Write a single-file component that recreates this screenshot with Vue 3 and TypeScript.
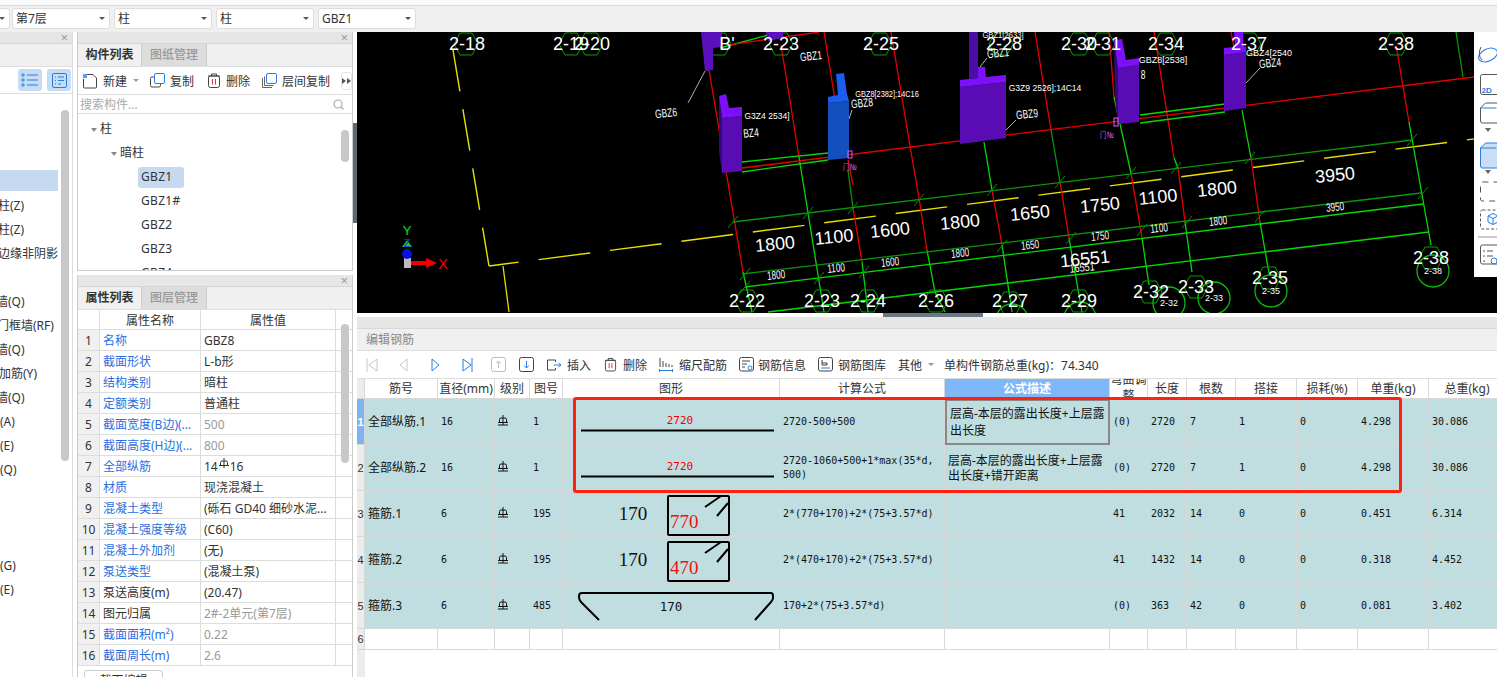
<script setup lang="ts">
interface Seg { d: string; c: string; w?: number }
interface Label { x: number; y: number; t: string; s: number; r?: number; sx?: number; c?: string }
interface Poly { p: string; c: string }

const selects = ['第7层', '柱', '柱', 'GBZ1']

const leftItems = [
  { t: '', sel: true, x: 0 },
  { t: '框架柱(Z)', x: -26 },
  { t: '框架柱(Z)', x: -26 },
  { t: '约束边缘非阴影', x: -26 },
  { t: '', x: 0 },
  { t: '砌体墙(Q)', x: -28 },
  { t: '人防门框墙(RF)', x: -27 },
  { t: '砌体墙(Q)', x: -28 },
  { t: '砌体加筋(Y)', x: -25 },
  { t: '砌体墙(Q)', x: -28 },
  { t: '门(A)', x: -12 },
  { t: '门(E)', x: -12 },
  { t: '墙(Q)', x: -12 },
  { t: '', x: 0 },
  { t: '', x: 0 },
  { t: '', x: 0 },
  { t: '门(G)', x: -12 },
  { t: '门(E)', x: -12 }
]

const treeLeaves = ['GBZ1#', 'GBZ2', 'GBZ3', 'GBZ4']

const attrs = [
  { n: '名称', v: 'GBZ8' },
  { n: '截面形状', v: 'L-b形' },
  { n: '结构类别', v: '暗柱' },
  { n: '定额类别', v: '普通柱' },
  { n: '截面宽度(B边)(...', v: '500', muted: true },
  { n: '截面高度(H边)(...', v: '800', muted: true },
  { n: '全部纵筋', v: '14', bar: '16' },
  { n: '材质', v: '现浇混凝土' },
  { n: '混凝土类型', v: '(砾石 GD40 细砂水泥...' },
  { n: '混凝土强度等级', v: '(C60)' },
  { n: '混凝土外加剂', v: '(无)' },
  { n: '泵送类型', v: '(混凝土泵)' },
  { n: '泵送高度(m)', v: '(20.47)', plain: true },
  { n: '图元归属', v: '2#-2单元(第7层)', plain: true, muted: true },
  { n: '截面面积(m²)', v: '0.22', muted: true },
  { n: '截面周长(m)', v: '2.6', muted: true }
]

const colWidths = [8, 73, 57, 35, 33, 217, 165, 165, 38, 39, 49, 61, 61, 71, 77]

const rebars = [
  { name: '全部纵筋.1', d: '16', no: '1', shape: 'line', val: '2720', f: '2720-500+500', desc: '层高-本层的露出长度+上层露出长度', adj: '(0)', len: '2720', n: '7', lap: '1', loss: '0', unit: '4.298', total: '30.086' },
  { name: '全部纵筋.2', d: '16', no: '1', shape: 'line', val: '2720', f: '2720-1060+500+1*max(35*d,\u200b500)', desc: '层高-本层的露出长度+上层露出长度+错开距离', adj: '(0)', len: '2720', n: '7', lap: '1', loss: '0', unit: '4.298', total: '30.086' },
  { name: '箍筋.1', d: '6', no: '195', shape: 'hoop', val: '770', f: '2*(770+170)+2*(75+3.57*d)', desc: '', adj: '41', len: '2032', n: '14', lap: '0', loss: '0', unit: '0.451', total: '6.314' },
  { name: '箍筋.2', d: '6', no: '195', shape: 'hoop', val: '470', f: '2*(470+170)+2*(75+3.57*d)', desc: '', adj: '41', len: '1432', n: '14', lap: '0', loss: '0', unit: '0.318', total: '4.452' },
  { name: '箍筋.3', d: '6', no: '485', shape: 'hook', val: '170', f: '170+2*(75+3.57*d)', desc: '', adj: '(0)', len: '363', n: '42', lap: '0', loss: '0', unit: '0.081', total: '3.402' }
]

const R = '#e80000'
const G = '#06d806'
const DG = '#0a960a'
const Y = '#e8e000'

const cadLines: Seg[] = [
  { d: 'M709 70L743 272', c: R },
  { d: 'M743 272L752 312', c: G },
  { d: 'M781 45L799 157', c: R },
  { d: 'M799 157L824 312', c: G },
  { d: 'M824 32L835 100', c: R },
  { d: 'M848 160L853 185', c: R },
  { d: 'M848 170L853 208', c: DG },
  { d: 'M853 208L862 262', c: R },
  { d: 'M862 262L868 312', c: G },
  { d: 'M891 32L910 146L919 198L927 250', c: R },
  { d: 'M927 250L935 292L945 312', c: G },
  { d: 'M984 142L992 190', c: G },
  { d: 'M992 190L1002 245', c: R },
  { d: 'M1002 245L1012 312', c: G },
  { d: 'M1035 32L1051 130', c: R },
  { d: 'M1051 130L1060 182', c: DG },
  { d: 'M1060 182L1069 238', c: R },
  { d: 'M1069 238L1082 312', c: G },
  { d: 'M1109 32L1114 97', c: R },
  { d: 'M1114 97L1131 173', c: G },
  { d: 'M1131 173L1142 238', c: R },
  { d: 'M1142 238L1149 285', c: G },
  { d: 'M1154 32L1174 158', c: R },
  { d: 'M1174 158L1178 168', c: G },
  { d: 'M1178 168L1185 222', c: R },
  { d: 'M1185 222L1192 272', c: G },
  { d: 'M1231 32L1234 47', c: R },
  { d: 'M1242 110L1251 158', c: G },
  { d: 'M1251 158L1260 222', c: R },
  { d: 'M1260 222L1269 273', c: G },
  { d: 'M1396 45L1409 122', c: R },
  { d: 'M1409 122L1431 245', c: G },
  { d: 'M1456 32L1463 77', c: DG },
  { d: 'M742 168L1474 77', c: R },
  { d: 'M742 162L828 153', c: G },
  { d: 'M742 172L828 160', c: G },
  { d: 'M1140 115L1225 104', c: G },
  { d: 'M1140 123L1225 112', c: G },
  { d: 'M720 48L768 35', c: G },
  { d: 'M728 45L819 32', c: R },
  { d: 'M733 222L1412 140', c: DG },
  { d: 'M742 274L1421 193', c: DG },
  { d: 'M745 287L1423 204', c: G },
  { d: 'M768 312L1429 232', c: G },
  { d: 'M503 266L509 312', c: Y },
  { d: 'M705 71L688 103', c: '#ddd', w: 0.8 },
  { d: 'M849 119L852 110', c: '#ddd', w: 0.8 },
  { d: 'M1006 130L1016 120', c: '#ddd', w: 0.8 },
  { d: 'M1246 83L1260 68', c: '#ddd', w: 0.8 },
  { d: 'M980 67L987 58', c: '#ddd', w: 0.8 }
]

const ticks = [
  [733, 222], [808, 213], [853, 208], [919, 200], [992, 190], [1060, 182], [1131, 173], [1176, 168], [1250, 158], [1412, 140],
  [745, 274], [745, 287], [819, 278], [864, 272], [1002, 246], [1071, 238], [1142, 230], [1187, 222], [1260, 216], [1423, 193]
]

const cols: Poly[] = [
  { p: '705,32 722,32 722,47 713,48 713,70 705,71 701,32', c: '#5b10bd' },
  { p: '766,32 783,32 783,38 768,41', c: '#5b10bd' },
  { p: '719,96 722,118 722,173 719,152', c: '#2f0a78' },
  { p: '722,118 742,116 742,171 722,173', c: '#5a0cb4' },
  { p: '719,96 726,94 729,108 742,107 742,116 722,118', c: '#7d10fa' },
  { p: '828,103 849,101 849,158 828,160', c: '#1450bd' },
  { p: '836,74 844,73 847,94 849,101 828,103 828,97 838,95', c: '#1c5cf0' },
  { p: '969,32 978,32 978,78 969,79', c: '#4b0ca8' },
  { p: '960,87 1006,82 1006,138 960,144', c: '#5a0cb4' },
  { p: '960,80 978,78 978,67 985,67 986,77 1006,75 1006,82 960,87', c: '#7d10fa' },
  { p: '1114,40 1118,68 1118,124 1115,98', c: '#2f0a78' },
  { p: '1118,68 1139,65 1139,122 1118,124', c: '#5a0cb4' },
  { p: '1114,40 1122,39 1126,60 1139,58 1139,65 1118,68', c: '#7d10fa' },
  { p: '1224,55 1246,52 1246,108 1224,111', c: '#5a0cb4' },
  { p: '1234,32 1243,32 1243,46 1246,47 1246,52 1224,55 1224,48 1235,47', c: '#7d10fa' }
]

const hexes = [
  [466, 44], [571, 44], [591, 44], [719, 44], [781, 44], [880, 44],
  [1001, 44], [1079, 44], [1103, 44], [1166, 44], [1249, 44], [1396, 44],
  [747, 301], [822, 301], [868, 301], [936, 301], [1010, 303], [1079, 301], [1150, 292], [1196, 287], [1269, 278], [1431, 258]
]

const circles = [[1169, 303], [1214, 298], [1271, 291], [1433, 271], [1012, 320], [1080, 318]]

const axisLabels = [
  ['2-18', 467, 44], ['2-19', 571, 44], ['2-20', 592, 44], ["B'", 727, 44], ['2-23', 781, 44], ['2-25', 881, 44],
  ['2-28', 1004, 44], ['2-30', 1079, 44], ['2-31', 1103, 44], ['2-34', 1166, 44], ['2-37', 1249, 44], ['2-38', 1396, 44],
  ['2-22', 747, 301], ['2-23', 822, 301], ['2-24', 868, 301], ['2-26', 936, 301], ['2-27', 1010, 301], ['2-29', 1079, 301],
  ['2-32', 1151, 292], ['2-33', 1196, 287], ['2-35', 1270, 278], ['2-38', 1431, 258]
] as const

const labels: Label[] = [
  ...axisLabels.map(([t, x, y]) => ({ t, x, y, s: 18 })),
  ...[['1800', 775, 244], ['1100', 834, 237], ['1600', 890, 230], ['1800', 960, 222], ['1650', 1030, 213], ['1750', 1100, 205], ['1100', 1158, 197], ['1800', 1217, 189], ['3950', 1335, 175]]
    .map(([t, x, y]) => ({ t: t as string, x: x as number, y: y as number, s: 18, r: -6 })),
  ...[['1800', 776, 275], ['1100', 836, 268], ['1600', 890, 262], ['1800', 960, 253], ['1650', 1030, 245], ['1750', 1100, 236], ['1100', 1159, 228], ['1800', 1218, 221], ['3950', 1335, 207]]
    .map(([t, x, y]) => ({ t: t as string, x: x as number, y: y as number, s: 12, r: -6, sx: 0.68 })),
  { t: '16551', x: 1085, y: 259, s: 18, r: -6 },
  { t: '16551', x: 1082, y: 267, s: 12, r: -6, sx: 0.75 },
  { t: '2-32', x: 1169, y: 303, s: 9 },
  { t: '2-33', x: 1214, y: 298, s: 9 },
  { t: '2-35', x: 1271, y: 291, s: 9 },
  { t: '2-38', x: 1433, y: 271, s: 9 },
  { t: 'GBZ1', x: 811, y: 56, s: 12, r: -6, sx: 0.7 },
  { t: 'GBZ6', x: 666, y: 113, s: 12, r: -6, sx: 0.7 },
  { t: 'G3Z4 2534]', x: 767, y: 116, s: 9, sx: 0.95 },
  { t: 'BZ4', x: 751, y: 133, s: 12, r: -6, sx: 0.7 },
  { t: 'GBZ8', x: 862, y: 103, s: 12, r: -6, sx: 0.7 },
  { t: 'GBZ8[2382];14C16', x: 887, y: 94, s: 9, sx: 0.82 },
  { t: 'GBZ1[2633]', x: 1003, y: 35, s: 9, sx: 0.85 },
  { t: 'GBZ1', x: 998, y: 53, s: 12, r: -6, sx: 0.7 },
  { t: 'G3Z9 2526];14C14', x: 1045, y: 88, s: 9, sx: 0.95 },
  { t: 'GBZ9', x: 1027, y: 114, s: 12, r: -6, sx: 0.7 },
  { t: 'GBZ8[2538]', x: 1163, y: 60, s: 9 },
  { t: '8', x: 1143, y: 75, s: 12, sx: 0.7 },
  { t: 'GBZ4[2540', x: 1269, y: 53, s: 9 },
  { t: 'GBZ4', x: 1270, y: 63, s: 12, r: -6, sx: 0.7 },
  { t: '门№', x: 850, y: 167, s: 9, sx: 0.7, c: '#e060f0' },
  { t: '门№', x: 1107, y: 135, s: 9, sx: 0.7, c: '#e060f0' }
]

const labelTransform = (l: Label) =>
  `translate(${l.x} ${l.y}) rotate(${l.r ?? 0}) scale(${l.sx ?? 1} 1)`
</script>

<template>
  <div class="app">
    <div class="topline"></div>
    <div class="topbar">
      <div class="select first"><i class="caret"></i></div>
      <div v-for="(s, i) in selects" :key="i" class="select">
        <span>{{ s }}</span><i class="caret"></i>
      </div>
    </div>

    <div class="main">
      <!-- 左侧导航 -->
      <aside class="left">
        <div class="strip"><span class="x">×</span></div>
        <div class="left-tabs"></div>
        <div class="left-tools">
          <span class="toggle">
            <svg width="18" height="14" viewBox="0 0 18 14" fill="none" stroke="#2a7de1"><circle cx="2" cy="2" r="1.2"/><circle cx="2" cy="7" r="1.2"/><circle cx="2" cy="12" r="1.2"/><path d="M6 2h11M6 7h11M6 12h11"/></svg>
          </span>
          <span class="toggle">
            <svg width="15" height="15" viewBox="0 0 15 15" fill="none" stroke="#2a7de1"><rect x=".5" y=".5" width="14" height="14" rx="1.5"/><path d="M3 4h1M6 4h6M3 7.5h1M6 7.5h6M3 11h1M6 11h3"/></svg>
          </span>
        </div>
        <div class="left-list">
          <div v-for="(it, i) in leftItems" :key="i" class="left-row" :class="{ sel: it.sel }">
            <span :style="{ marginLeft: it.x + 'px' }">{{ it.t }}</span>
          </div>
          <div class="scroll left-scroll"></div>
        </div>
      </aside>

      <!-- 构件列表 / 属性列表 -->
      <section class="mid">
        <div class="panel list-panel">
          <div class="strip"><span class="x">×</span></div>
          <div class="tabs"><span class="tab on">构件列表</span><span class="tab">图纸管理</span></div>
          <div class="tools">
            <svg class="new-ic" width="16" height="16" viewBox="0 0 16 16" fill="none" stroke="#444"><path d="M5 1.5h6l3.5 3.5v9a1 1 0 01-1 1h-11a1 1 0 01-1-1V6"/><rect x="1" y="1" width="4" height="4" fill="#5b9be8" stroke="none"/></svg>
            <span class="t1">新建</span><i class="mini"></i>
            <svg class="copy-ic" width="15" height="15" viewBox="0 0 15 15" fill="none"><rect x=".5" y="4" width="10" height="10" rx="1.5" stroke="#444"/><rect x="4.5" y=".5" width="10" height="10" rx="1.5" fill="#fff" stroke="#2a7de1"/></svg>
            <span class="t2">复制</span>
            <svg class="del-ic" width="14" height="15" viewBox="0 0 14 15" fill="none" stroke="#444"><path d="M1 3h12M4.5 3V1h5v2"/><rect x="1.5" y="3" width="11" height="11.5" rx="2"/><path d="M5.5 6v5.5M8.5 6v5.5" stroke="#e03030"/></svg>
            <span class="t3">删除</span>
            <svg class="lay-ic" width="15" height="15" viewBox="0 0 15 15" fill="none"><path d="M.5 5v9.5H10M2.5 3.500v9h9" stroke="#666"/><rect x="4.5" y=".5" width="10" height="10" rx="1.5" fill="#fff" stroke="#2a7de1"/></svg>
            <span class="t4">层间复制</span>
            <span class="more">
              <svg width="9" height="6" viewBox="0 0 9 6" fill="#555"><path d="M0 0l4 3-4 3zM5 0l4 3-4 3z"/></svg>
            </span>
          </div>
          <div class="search">
            <span>搜索构件...</span>
            <svg width="11" height="11" viewBox="0 0 11 11" fill="none" stroke="#aaa" stroke-width="1.2"><circle cx="5" cy="5" r="4"/><path d="M8 8l2.5 2.5"/></svg>
          </div>
          <div class="tree">
            <div class="node lv1"><i class="tri"></i>柱</div>
            <div class="node lv2"><i class="tri"></i>暗柱</div>
            <div class="node lv3"><span class="leaf on">GBZ1</span></div>
            <div v-for="l in treeLeaves" :key="l" class="node lv3"><span class="leaf">{{ l }}</span></div>
            <div class="scroll tree-scroll"></div>
          </div>
        </div>

        <div class="panel attr-panel">
          <div class="strip"><span class="x">×</span></div>
          <div class="tabs"><span class="tab on">属性列表</span><span class="tab">图层管理</span></div>
          <div class="attr-wrap">
            <table class="attr">
              <colgroup><col style="width:22px"><col style="width:101px"><col style="width:135px"><col></colgroup>
              <thead>
                <tr><th class="idx-h"></th><th>属性名称</th><th>属性值</th><th class="blank"></th></tr>
              </thead>
              <tbody>
                <tr v-for="(a, i) in attrs" :key="i">
                  <td class="idx">{{ i + 1 }}</td>
                  <td class="name" :class="{ plain: a.plain }">{{ a.n }}</td>
                  <td class="val" :class="{ muted: a.muted }">
                    {{ a.v }}<svg v-if="a.bar" class="bar-ic sm" viewBox="0 0 10 11" fill="none" stroke="#333"><path d="M1.5 7V4.5a1.5 1.5 0 011.5-1.5h4a1.5 1.5 0 011.5 1.5V7M5 0v10M0 7.5h10"/></svg>{{ a.bar }}
                  </td>
                  <td class="blank"></td>
                </tr>
              </tbody>
            </table>
            <div class="scroll attr-scroll"></div>
          </div>
          <div class="sec-btn"><span>截面编辑</span></div>
        </div>
      </section>

      <div class="splitter"></div>

      <section class="right">
        <!-- CAD 视图 -->
        <div class="cad">
          <svg class="cad-svg" viewBox="357 32 1140 281" width="1140" height="281">
            <path d="M453 50L489 266" stroke="#e8e000" stroke-width="1.4" stroke-dasharray="42 18" />
            <path d="M489 266L1497 136" stroke="#e8e000" stroke-width="1.4" stroke-dasharray="52 20" stroke-dashoffset="22" />
            <path v-for="(l, i) in cadLines" :key="'l' + i" :d="l.d" :stroke="l.c" :stroke-width="l.w ?? 1.3" fill="none" />
            <path v-for="(t, i) in ticks" :key="'t' + i" :d="`M${t[0] - 5} ${t[1] + 6}L${t[0] + 5} ${t[1] - 6}`" stroke="#0a8f0a" />
            <g fill="none" stroke="#0a9a0a">
              <polygon v-for="(h, i) in hexes" :key="'h' + i"
                :points="`${h[0] - 12},${h[1]} ${h[0] - 6},${h[1] - 11} ${h[0] + 6},${h[1] - 11} ${h[0] + 12},${h[1]} ${h[0] + 6},${h[1] + 11} ${h[0] - 6},${h[1] + 11}`" />
            </g>
            <circle v-for="(c, i) in circles" :key="'c' + i" :cx="c[0]" :cy="c[1]" r="16" fill="none" stroke="#0dbb0d" stroke-width="1.3" />
            <polygon v-for="(c, i) in cols" :key="'p' + i" :points="c.p" :fill="c.c" />
            <rect x="848" y="151" width="4" height="7" fill="none" stroke="#e060f0" />
            <rect x="1114" y="118" width="4" height="8" fill="none" stroke="#e060f0" />
            <text v-for="(l, i) in labels" :key="'x' + i" class="cad-text" :transform="labelTransform(l)"
              :font-size="l.s" :fill="l.c ?? '#fff'">{{ l.t }}</text>
            <!-- 坐标轴 -->
            <rect x="404" y="258" width="7" height="10" fill="#bbb" />
            <circle cx="407" cy="254" r="5" fill="#0a10e0" />
            <path d="M407 240l5 7h-10z" fill="#10d020" />
            <path d="M411 261h15v-3l11 5-11 5v-3h-15z" fill="#f00000" />
            <text class="cad-text" x="407" y="230" font-size="13" fill="#10e020" text-anchor="middle">Y</text>
            <text class="cad-text" x="407" y="243" font-size="11" fill="#1a30e0" text-anchor="middle">Z</text>
            <text class="cad-text" x="443" y="263" font-size="15" fill="#f00000" text-anchor="middle">X</text>
          </svg>
          <!-- 视图工具条 -->
          <div class="view-tools">
            <svg width="23" height="245" viewBox="0 0 23 245" fill="none" stroke="#2a7de1">
              <ellipse cx="14" cy="23" rx="10" ry="6" transform="rotate(-25 14 23)" />
              <path d="M7 15q-4 8 1 13" stroke="#555" />
              <rect x="6.500" y="42.500" width="20" height="20" rx="2" stroke="#555" />
              <text x="7.500" y="61" font-size="8" font-family="Liberation Sans, sans-serif" font-weight="700" fill="#2a7de1" stroke="none">2D</text>
              <path d="M6.500 76l5-5h14v20H8.500a2 2 0 01-2-2z" stroke="#555" />
              <path d="M6.500 76h16" stroke="#2a7de1" />
              <path d="M11 96l3 4 3-4z" fill="#666" stroke="none" />
              <path d="M6.500 116l5-5h14v25H8.500a2 2 0 01-2-2z" fill="#c9def5" />
              <path d="M6.500 116h16" />
              <path d="M11 138l3 4 3-4z" fill="#666" stroke="none" />
              <rect x="6.500" y="150" width="22" height="19" rx="2" stroke="#555" stroke-dasharray="6 5" />
              <rect x="6.500" y="178" width="22" height="19" rx="2" stroke="#555" stroke-dasharray="3 2" />
              <path d="M14 184l5-2.500 5 2.500v6l-5 2.500-5-2.500zM14 184l5 2.500 5-2.500M19 186.500v6" />
              <path d="M4 205h20" stroke="#999" />
              <rect x="6.500" y="213" width="22" height="19" rx="2" stroke="#555" />
              <path d="M9 219h2M13 219h6M9 224h2M13 224h6M9 229h2" stroke="#555" />
              <circle cx="20" cy="229" r="3" />
            </svg>
          </div>
        </div>
        <div class="grip-bar"><span class="grip"></span></div>

        <!-- 编辑钢筋 -->
        <div class="rebar">
          <div class="rebar-strip"></div>
          <div class="rebar-title">编辑钢筋</div>
          <div class="rebar-tools">
            <svg class="nav" width="116" height="16" viewBox="0 0 116 16" fill="none">
              <path d="M11 2L3 8l8 6zM1 1v14" stroke="#c8c8c8" />
              <path d="M41 2l-7 6 7 6z" stroke="#c8c8c8" />
              <path d="M66 2l7 6-7 6z" stroke="#2a7de1" />
              <path d="M97 2l8 6-8 6zM106 1v14" stroke="#2a7de1" />
            </svg>
            <svg class="up-ic" width="15" height="15" viewBox="0 0 15 15" fill="none" stroke="#bbb"><rect x=".5" y=".5" width="14" height="14" rx="2"/><path d="M7.500 11V4M5 6.500l2.500-2.500 2.500 2.500"/></svg>
            <svg class="down-ic" width="15" height="15" viewBox="0 0 15 15" fill="none"><rect x=".5" y=".5" width="14" height="14" rx="2" stroke="#444"/><path d="M7.500 4v7M5 8.500L7.500 11 10 8.500" stroke="#2a7de1"/></svg>
            <svg class="ins-ic" width="15" height="12" viewBox="0 0 15 12" fill="none" stroke="#444"><path d="M.5 1h8M.5 11h8M.5 1v10M8.500 1v2M8.500 9v2"/><path d="M7 6h7M11.500 4l2.500 2-2.500 2" stroke="#2a7de1"/></svg>
            <span class="act">插入</span>
            <svg class="trash-ic" width="13" height="15" viewBox="0 0 14 15" fill="none" stroke="#444"><path d="M1 3h12M4.500 3V1h5v2"/><rect x="1.500" y="3" width="11" height="11.500" rx="2"/><path d="M5.500 6v5.500M8.500 6v5.500" stroke="#e03030"/></svg>
            <span class="act gap6">删除</span>
            <svg class="tool-ic" width="14" height="15" viewBox="0 0 14 15" fill="none" stroke="#444"><path d="M1 1v9M4 4v6M7 6v4M10 7v3M13 8v2"/><path d="M.5 13.500h13M.5 12v3M13.500 12v3" stroke="#2a7de1"/></svg>
            <span class="act gap6">缩尺配筋</span>
            <svg class="tool-ic" width="15" height="15" viewBox="0 0 15 15" fill="none" stroke="#444"><rect x=".5" y=".5" width="14" height="13.500" rx="2"/><path d="M3 4h8M3 7h5M3 10h3"/><circle cx="11" cy="11" r="2" stroke="#2a7de1"/></svg>
            <span class="act gap4">钢筋信息</span>
            <svg class="tool-ic" width="15" height="15" viewBox="0 0 15 15" fill="none" stroke="#444"><rect x=".5" y=".5" width="14" height="13.500" rx="2"/><path d="M4 3v5h5V6H4"/><path d="M3 11h9" stroke="#2a7de1"/></svg>
            <span class="act">钢筋图库</span>
            <span class="act other">其他</span><i class="mini"></i>
            <span class="weight">单构件钢筋总重(kg)：74.340</span>
          </div>

          <div class="grid-wrap">
            <table class="grid">
              <colgroup><col v-for="(w, i) in colWidths" :key="i" :style="{ width: w + 'px' }"></colgroup>
              <thead>
                <tr>
                  <th class="rn"></th><th>筋号</th><th>直径(mm)</th><th>级别</th><th>图号</th><th>图形</th><th>计算公式</th>
                  <th class="active">公式描述</th>
                  <th><div class="clip"><span>弯曲调整</span></div></th>
                  <th>长度</th><th>根数</th><th>搭接</th><th>损耗(%)</th><th>单重(kg)</th><th>总重(kg)</th>
                </tr>
              </thead>
              <tbody>
                <tr v-for="(r, i) in rebars" :key="i" class="filled">
                  <td class="rn" :class="{ cur: i === 0 }">{{ i + 1 }}</td>
                  <td class="cjk">{{ r.name }}</td>
                  <td class="mono">{{ r.d }}</td>
                  <td class="mono"><svg class="bar-ic" viewBox="0 0 10 11" fill="none" stroke="#111"><path d="M1.500 7V4.500a1.500 1.500 0 011.500-1.500h4a1.500 1.500 0 011.500 1.500V7M5 0v10M0 7.500h10M0 10h10"/></svg></td>
                  <td class="mono">{{ r.no }}</td>
                  <td class="shape">
                    <svg width="217" height="45" viewBox="1 0 217 45" fill="none">
                      <template v-if="r.shape === 'line'">
                        <text x="118" y="25" class="sv-mono" fill="#f00000" text-anchor="middle">{{ r.val }}</text>
                        <path d="M19 31.500h193" stroke="#000" stroke-width="2" />
                      </template>
                      <template v-else-if="r.shape === 'hoop'">
                        <text x="71" y="29" class="sv-serif" fill="#111" text-anchor="middle">170</text>
                        <rect x="106" y="5" width="61" height="39" rx="1" stroke="#000" stroke-width="2" />
                        <path d="M143 16l16-11M155 25l11-13" stroke="#000" stroke-width="2" />
                        <text x="108" y="37" class="sv-serif" fill="#f01010">{{ r.val }}</text>
                      </template>
                      <template v-else>
                        <path d="M37 37L19 19Q17 17 17 14V13Q17 10 20 10H209Q211 10 211 13V15Q211 17 209 19L193 37" stroke="#000" stroke-width="2" />
                        <text x="109" y="28" class="sv-mono wide" fill="#111" text-anchor="middle">{{ r.val }}</text>
                      </template>
                    </svg>
                  </td>
                  <td class="mono formula">{{ r.f }}</td>
                  <td class="cjk desc" :class="{ edit: i === 0 }">{{ r.desc }}</td>
                  <td class="mono">{{ r.adj }}</td>
                  <td class="mono">{{ r.len }}</td>
                  <td class="mono">{{ r.n }}</td>
                  <td class="mono">{{ r.lap }}</td>
                  <td class="mono">{{ r.loss }}</td>
                  <td class="mono">{{ r.unit }}</td>
                  <td class="mono">{{ r.total }}</td>
                </tr>
                <tr class="empty">
                  <td class="rn">6</td>
                  <td v-for="n in 14" :key="n"></td>
                </tr>
              </tbody>
            </table>
          </div>
          <div class="red-box"></div>
        </div>
      </section>
    </div>
  </div>
</template>

<style scoped>
.app {
  width: 1497px;
  height: 677px;
  overflow: hidden;
  display: flex;
  flex-direction: column;
  background: #fff;
  color: #333;
  font-family: "Noto Sans", "Noto Sans CJK SC", sans-serif;
  font-size: 12px;
}
.topline {
  height: 5px;
  flex: none;
  background: #fafafa;
  border-bottom: 1px solid #ddd;
}
.topbar {
  height: 26px;
  flex: none;
  box-sizing: border-box;
  padding: 2px 0 0 12px;
  display: flex;
  gap: 4px;
  background: #f0f0f0;
  position: relative;
  overflow: hidden;
}
.select {
  width: 98px;
  height: 21px;
  box-sizing: border-box;
  background: #fff;
  border: 1px solid #ddd;
  border-radius: 3px;
  padding: 0 3px;
  line-height: 19px;
  font-size: 12px;
  display: flex;
  justify-content: space-between;
  align-items: center;
}
.select.first {
  position: absolute;
  left: -88px;
  top: 2px;
  justify-content: flex-end;
}
.caret {
  width: 0;
  height: 0;
  border: 3px solid transparent;
  border-top: 3px solid #555;
  margin: 3px 1px 0 0;
}
.main {
  flex: 1;
  min-height: 0;
  display: flex;
}

.strip {
  height: 11px;
  background: #e6e6e6;
  border-bottom: 1px solid #d5d5d5;
  display: flex;
  justify-content: flex-end;
  flex: none;
}
.x {
  color: #999;
  font-size: 13px;
  line-height: 11px;
  padding-right: 4px;
  font-family: "Liberation Sans", sans-serif;
}

.left {
  width: 72px;
  flex: none;
  border-right: 1px solid #ddd;
  display: flex;
  flex-direction: column;
  overflow: hidden;
}
.left-tabs {
  height: 22px;
  background: #f0f0f0;
  border-bottom: 1px solid #ddd;
  flex: none;
}
.left-tools {
  height: 27px;
  box-sizing: border-box;
  border-bottom: 1px solid #ddd;
  display: flex;
  justify-content: flex-end;
  align-items: center;
  gap: 5px;
  padding-right: 1px;
  flex: none;
}
.toggle {
  width: 24px;
  height: 22px;
  border-radius: 3px;
  background: #c5dcf5;
  display: flex;
  align-items: center;
  justify-content: center;
}
.left-list {
  position: relative;
  flex: 1;
  padding-top: 76px;
  overflow: hidden;
}
.left-row {
  height: 24px;
  line-height: 24px;
  white-space: nowrap;
  width: 58px;
  overflow: hidden;
  font-size: 12px;
}
.left-row.sel {
  height: 21px;
  margin-bottom: 3px;
  background: #c5daf0;
}
.left-row:not(.sel) {
  width: 72px;
}
.left-row span {
  display: inline-block;
}
.scroll {
  position: absolute;
  background: #c8c8c8;
  border-radius: 4px;
  width: 8px;
}
.left-scroll {
  left: 61px;
  top: 16px;
  height: 351px;
}

.mid {
  width: 276px;
  flex: none;
  margin-left: 4px;
  display: flex;
  flex-direction: column;
  gap: 4px;
}
.panel {
  box-sizing: border-box;
  border-left: 1px solid #ccc;
  border-right: 1px solid #ccc;
  display: flex;
  flex-direction: column;
}
.list-panel {
  height: 239px;
  border-bottom: 1px solid #ccc;
}
.attr-panel {
  flex: 1;
  min-height: 0;
}
.tabs {
  height: 23px;
  box-sizing: border-box;
  display: flex;
  background: #f0f0f0;
  border-bottom: 1px solid #ddd;
  flex: none;
}
.tab {
  width: 65px;
  text-align: center;
  font-size: 12px;
  line-height: 22px;
  color: #999;
  background: #ddd;
  border-right: 1px solid #ccc;
  font-weight: 500;
  box-sizing: border-box;
}
.tab.on {
  color: #333;
  background: #f0f0f0;
  font-weight: 700;
  width: 64px;
  border-right: 1px solid #ccc;
}
.tools {
  height: 28px;
  box-sizing: border-box;
  border-bottom: 1px solid #ddd;
  display: flex;
  align-items: center;
  padding-left: 4px;
  flex: none;
}
.tools span {
  font-size: 12px;
  white-space: nowrap;
}
.tools svg { flex: none; }
.t1 { margin-left: 5px; }
.mini {
  width: 0;
  height: 0;
  border: 3px solid transparent;
  border-top: 3px solid #999;
  margin: 3px 0 0 6px;
  flex: none;
}
.copy-ic { margin-left: 11px; }
.t2 { margin-left: 5px; }
.del-ic { margin-left: 13px; }
.t3 { margin-left: 5px; }
.lay-ic { margin-left: 12px; }
.t4 { margin-left: 5px; }
.more {
  margin-left: 11px;
  width: 11px;
  height: 18px;
  flex: none;
  border: 1px solid #e5e5e5;
  border-radius: 3px;
  box-sizing: border-box;
  display: flex;
  align-items: center;
  justify-content: center;
}
.search {
  height: 19px;
  box-sizing: border-box;
  border-bottom: 1px solid #ddd;
  display: flex;
  align-items: center;
  justify-content: space-between;
  padding: 0 8px 0 2px;
  color: #aaa;
  font-size: 12px;
  flex: none;
}
.tree {
  position: relative;
  flex: 1;
  min-height: 0;
  overflow: hidden;
  padding-top: 3px;
}
.node {
  height: 24px;
  line-height: 24px;
  display: flex;
  align-items: center;
  font-size: 12px;
}
.lv1 { padding-left: 13px; }
.lv2 { padding-left: 33px; }
.lv3 { padding-left: 60px; }
.tri {
  width: 0;
  height: 0;
  border: 3.5px solid transparent;
  border-top: 4px solid #888;
  margin: 4px 3px 0 0;
}
.leaf {
  display: block;
  height: 21px;
  line-height: 20px;
  padding: 0 3px;
  border-radius: 3px;
  min-width: 40px;
  letter-spacing: .3px;
}
.leaf.on { background: #c5daf0; }
.tree-scroll {
  left: 263px;
  top: 16px;
  height: 32px;
}

.attr-wrap {
  position: relative;
  flex: none;
}
.attr {
  border-collapse: separate;
  border-spacing: 0;
  table-layout: fixed;
  width: 274px;
}
.attr th, .attr td {
  height: 21px;
  box-sizing: border-box;
  border-right: 1px solid #ddd;
  border-bottom: 1px solid #ddd;
  font-size: 12px;
  padding: 0;
  overflow: hidden;
  white-space: nowrap;
}
.attr th {
  height: 20px;
  font-weight: 400;
  text-align: center;
}
.attr .blank { border-right: 0; }
.attr .idx {
  background: #f0f0f0;
  text-align: center;
}
.name {
  color: #2a6fe0;
  padding-left: 3px !important;
}
.name.plain { color: #333; }
.val { padding-left: 3px !important; }
.val.muted { color: #999; }
.bar-ic {
  width: 10px;
  height: 11px;
  vertical-align: -1px;
}
.bar-ic.sm { margin: 0 1px 3px; }
.attr-scroll {
  left: 263px;
  top: 14px;
  height: 139px;
}
.sec-btn {
  margin: 4px 0 0 6px;
  width: 79px;
  height: 20px;
  box-sizing: border-box;
  border: 1px solid #ccc;
  border-radius: 3px;
  text-align: center;
  line-height: 20px;
}

.splitter {
  width: 4px;
  flex: none;
  background: linear-gradient(#fff 0 91px, #5a6a78 91px 191px, #fff 191px);
}

.right {
  flex: 1;
  min-width: 0;
  display: flex;
  flex-direction: column;
  overflow: hidden;
}
.cad {
  height: 281px;
  flex: none;
  background: #000;
  position: relative;
  overflow: hidden;
}
.cad-svg { display: block; }
.cad-text {
  font-family: "Liberation Sans", sans-serif;
  text-anchor: middle;
  dominant-baseline: central;
}
.view-tools {
  position: absolute;
  right: 0;
  top: 0;
  width: 23px;
  height: 245px;
  background: #fff;
}
.grip-bar {
  height: 4px;
  flex: none;
  padding-left: 526px;
  background: #fff;
}
.grip {
  display: block;
  width: 100px;
  height: 4px;
  background: #6a7886;
}
.rebar {
  flex: 1;
  min-height: 0;
  position: relative;
  display: flex;
  flex-direction: column;
}
.rebar-strip {
  height: 11px;
  background: #e6e6e6;
  border-bottom: 1px solid #d8d8d8;
  flex: none;
}
.rebar-title {
  height: 21px;
  line-height: 21px;
  background: #f0f0f0;
  color: #888;
  border-bottom: 1px solid #ddd;
  padding-left: 9px;
  font-size: 12px;
  flex: none;
}
.rebar-tools {
  height: 28px;
  box-sizing: border-box;
  display: flex;
  align-items: center;
  border-bottom: 1px solid #ddd;
  padding-left: 9px;
  flex: none;
}
.rebar-tools svg { flex: none; }
.up-ic { margin-left: 9px; }
.down-ic { margin-left: 13px; }
.ins-ic { margin-left: 13px; }
.trash-ic { margin-left: 13px; }
.tool-ic { margin-left: 12px; }
.act {
  margin-left: 5px;
  font-size: 12px;
  white-space: nowrap;
}
.act.gap6 { margin-left: 6px; }
.act.gap4 { margin-left: 4px; }
.act.other { margin-left: 12px; }
.weight {
  margin-left: 10px;
  font-size: 12px;
  white-space: nowrap;
}
.grid-wrap {
  flex: 1;
  overflow: hidden;
  background: linear-gradient(90deg, #ececec 0 8px, #fff 8px);
}
.grid {
  border-collapse: separate;
  border-spacing: 0;
  table-layout: fixed;
  width: 1149px;
}
.grid th, .grid td {
  box-sizing: border-box;
  border-right: 1px solid #d8d8d8;
  border-bottom: 1px solid #d8d8d8;
  padding: 0;
  overflow: hidden;
}
.grid th {
  height: 20px;
  font-weight: 400;
  font-size: 12px;
  text-align: center;
  white-space: nowrap;
  line-height: 18px;
}
.grid th.active {
  background: #7fb8f8;
  color: #fff;
  font-weight: 700;
}
.clip {
  height: 19px;
  overflow: hidden;
  white-space: normal;
  line-height: 16px;
}
.clip span {
  display: block;
  margin-top: -7px;
}
.grid td {
  height: 46px;
  font-size: 10px;
  color: #111;
}
.filled td { background: #c0dee0; }
.filled .rn, .empty .rn, .grid th.rn {
  background: #ececec;
}
.grid td.rn {
  font-family: "Liberation Sans", sans-serif;
  font-size: 11px;
  text-align: center;
  color: #333;
}
.grid td.rn.cur {
  background: #7fb3ef;
  color: #fff;
  font-weight: 700;
}
.empty td {
  height: 21px;
  background: #fff;
}
.mono {
  font-family: "DejaVu Sans Mono", monospace;
  padding-left: 3px !important;
  line-height: 14px;
}
.formula { padding-right: 2px !important; }
.cjk {
  font-size: 12px !important;
  padding-left: 3px !important;
  line-height: 14px;
}
.desc {
  padding-left: 3px !important;
  line-height: 15px;
}
.desc.edit {
  border: 2px solid #888 !important;
  line-height: 17px;
}
.shape { line-height: 0; }
.shape svg { display: block; }
.sv-mono {
  font-family: "DejaVu Sans Mono", monospace;
  font-size: 11px;
}
.sv-mono.wide { font-size: 12.5px; font-weight: 400; }
.sv-serif {
  font-family: "Liberation Serif", serif;
  font-size: 19px;
}
.red-box {
  position: absolute;
  left: 216px;
  top: 80px;
  width: 829px;
  height: 96px;
  box-sizing: border-box;
  border: 3px solid #ff2010;
  border-radius: 3px;
  pointer-events: none;
}
</style>
